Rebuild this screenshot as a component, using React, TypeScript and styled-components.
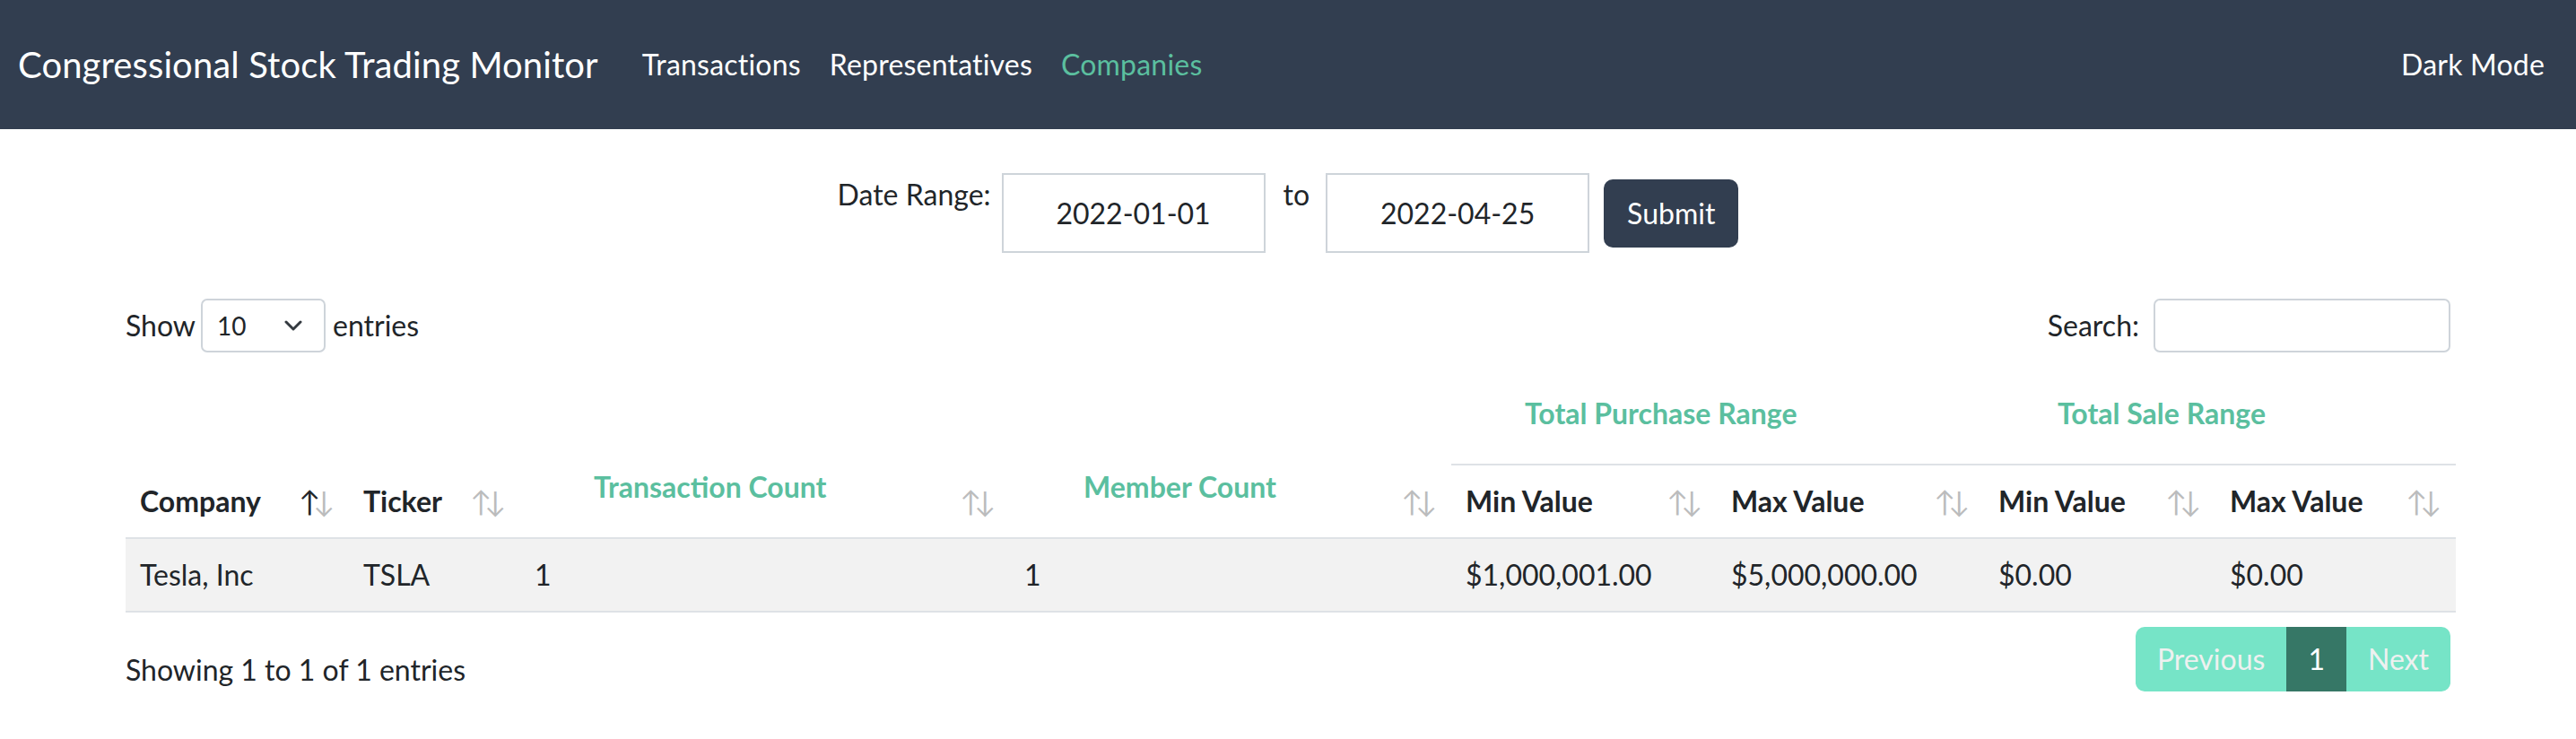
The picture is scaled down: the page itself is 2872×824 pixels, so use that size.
import React from "react";
import styled, { createGlobalStyle } from "styled-components";

const GlobalStyle = createGlobalStyle`
  html, body { margin: 0; padding: 0; background: #ffffff; }
  body {
    font-family: Lato, "Noto Sans", "Liberation Sans", sans-serif;
    color: #212529;
    font-size: 32px;
    line-height: 48px;
  }
  * { box-sizing: border-box; }
`;

const NAVY = "#323e50";
const TEAL = "#5bbf9f";

const Navbar = styled.nav`
  height: 144px;
  background: ${NAVY};
  display: flex;
  align-items: center;
  justify-content: space-between;
  padding: 0 19px 0 20px;
`;

const NavLeft = styled.div`
  display: flex;
  align-items: center;
`;

const Brand = styled.a`
  font-size: 40px;
  line-height: 60px;
  color: #ffffff;
  margin-right: 33px;
  letter-spacing: 0.1px;
  white-space: nowrap;
  text-decoration: none;
`;

const NavLink = styled.a<{ $active?: boolean }>`
  font-size: 32px;
  line-height: 48px;
  padding: 0 16px;
  letter-spacing: 0.2px;
  color: ${(p) => (p.$active ? TEAL : "#ffffff")};
  text-decoration: none;
  white-space: nowrap;
`;

const DateForm = styled.form`
  display: flex;
  justify-content: center;
  align-items: flex-start;
  margin-top: 49px;
`;

const FormLabel = styled.label<{ $ml?: number; $mr?: number }>`
  font-size: 32px;
  line-height: 48px;
  margin: 0 ${(p) => p.$mr ?? 12}px 0 ${(p) => p.$ml ?? 0}px;
  white-space: nowrap;
`;

const DateInput = styled.input`
  width: 294px;
  height: 89px;
  border: 2px solid #ced4da;
  border-radius: 0;
  background: #ffffff;
  text-align: center;
  font-family: inherit;
  font-size: 32px;
  color: #212529;
  padding: 0;
  outline: none;
`;

const SubmitButton = styled.button`
  height: 76px;
  margin: 7px 0 0 16px;
  padding: 0 26px;
  background: ${NAVY};
  color: #ffffff;
  border: none;
  border-radius: 10px;
  font-family: inherit;
  font-size: 32px;
  line-height: 48px;
`;

const Container = styled.div`
  width: 2592px;
  margin: 51px auto 0;
`;

const Controls = styled.div`
  display: flex;
  justify-content: space-between;
  align-items: center;
  height: 60px;
`;

const ControlGroup = styled.label`
  display: flex;
  align-items: center;
  font-size: 32px;
  line-height: 48px;
  white-space: nowrap;
`;

const LengthSelect = styled.div`
  width: 139px;
  height: 60px;
  margin: 0 8px 0 6px;
  border: 2px solid #ced4da;
  border-radius: 7px;
  display: flex;
  align-items: center;
  justify-content: space-between;
  padding: 0 24px 0 16px;
  font-size: 28px;
  color: #212529;
`;

const SearchInput = styled.input`
  width: 331px;
  height: 60px;
  margin-left: 16px;
  border: 2px solid #ced4da;
  border-radius: 7px;
  font-family: inherit;
  font-size: 28px;
  padding: 0 16px;
  outline: none;
`;

const Table = styled.table`
  margin-top: 28px;
  width: 2598px;
  border-collapse: collapse;
  table-layout: fixed;
`;

const Th = styled.th<{
  $teal?: boolean;
  $indent?: boolean;
  $raised?: boolean;
  $sortable?: boolean;
  $group?: boolean;
}>`
  position: relative;
  font-weight: 700;
  font-size: 32px;
  line-height: 48px;
  text-align: left;
  vertical-align: ${(p) => (p.$group ? "top" : "bottom")};
  padding: 16px ${(p) => (p.$sortable ? 52 : 16)}px
    ${(p) => (p.$raised || p.$group ? 32 : 16)}px
    ${(p) => (p.$indent ? 82 : 16)}px;
  border-bottom: 2px solid #dee2e6;
  color: ${(p) => (p.$teal ? TEAL : "#212529")};
  white-space: nowrap;
`;

const SortArrow = styled.span<{ $dir: "up" | "down"; $on?: boolean }>`
  position: absolute;
  bottom: 16px;
  right: ${(p) => (p.$dir === "up" ? 32 : 16)}px;
  font-weight: 400;
  line-height: 48px;
  color: #212529;
  opacity: ${(p) => (p.$on ? 1 : 0.3)};
`;

const Row = styled.tr`
  background: #f2f2f2;
`;

const Td = styled.td`
  padding: 16px;
  font-size: 32px;
  line-height: 48px;
  border-bottom: 2px solid #dee2e6;
  white-space: nowrap;
`;

const Footer = styled.div`
  display: flex;
  justify-content: space-between;
  align-items: flex-start;
`;

const Info = styled.div`
  padding-top: 40px;
  font-size: 32px;
  line-height: 48px;
`;

const Pagination = styled.ul`
  display: flex;
  list-style: none;
  margin: 16px 0 0;
  padding: 0;
  border-radius: 10px;
  overflow: hidden;
`;

const PageItem = styled.li<{ $active?: boolean }>`
  height: 72px;
  padding: 0 24px;
  font-size: 32px;
  line-height: 72px;
  background: ${(p) => (p.$active ? "#367766" : "#76e4c7")};
  color: ${(p) => (p.$active ? "#ffffff" : "#eef1f0")};
`;

const Chevron = () => (
  <svg width="20" height="12" viewBox="0 0 20 12" fill="none">
    <path d="M2 2l8 8 8-8" stroke="#343a40" strokeWidth="3" strokeLinecap="round" strokeLinejoin="round" />
  </svg>
);

type Col = { label: string; teal?: boolean; indent?: boolean; raised?: boolean; on?: boolean };

const SortArrows = ({ on }: { on?: boolean }) => (
  <>
    <SortArrow $dir="up" $on={on}>↑</SortArrow>
    <SortArrow $dir="down">↓</SortArrow>
  </>
);

const leadCols: Col[] = [
  { label: "Company", on: true },
  { label: "Ticker" },
  { label: "Transaction Count", teal: true, indent: true, raised: true },
  { label: "Member Count", teal: true, indent: true, raised: true },
];

const widths = [249, 191, 546, 492, 296, 298, 258, 268];

const rows = [
  ["Tesla, Inc", "TSLA", "1", "1", "$1,000,001.00", "$5,000,000.00", "$0.00", "$0.00"],
];

export default function App() {
  return (
    <>
      <GlobalStyle />
      <Navbar>
        <NavLeft>
          <Brand>Congressional Stock Trading Monitor</Brand>
          <NavLink>Transactions</NavLink>
          <NavLink>Representatives</NavLink>
          <NavLink $active>Companies</NavLink>
        </NavLeft>
        <NavLink>Dark Mode</NavLink>
      </Navbar>

      <DateForm onSubmit={(e) => e.preventDefault()}>
        <FormLabel $mr={12}>Date Range:</FormLabel>
        <DateInput readOnly defaultValue="2022-01-01" />
        <FormLabel $ml={20} $mr={18}>to</FormLabel>
        <DateInput readOnly defaultValue="2022-04-25" />
        <SubmitButton type="submit">Submit</SubmitButton>
      </DateForm>

      <Container>
        <Controls>
          <ControlGroup>
            Show
            <LengthSelect>
              <span>10</span>
              <Chevron />
            </LengthSelect>
            entries
          </ControlGroup>
          <ControlGroup>
            Search:
            <SearchInput />
          </ControlGroup>
        </Controls>

        <Table>
          <colgroup>
            {widths.map((w, i) => (
              <col key={i} style={{ width: w }} />
            ))}
          </colgroup>
          <thead>
            <tr>
              {leadCols.map((c) => (
                <Th
                  key={c.label}
                  rowSpan={2}
                  $sortable
                  $teal={c.teal}
                  $indent={c.indent}
                  $raised={c.raised}
                >
                  {c.label}
                  <SortArrows on={c.on} />
                </Th>
              ))}
              <Th colSpan={2} $group $teal $indent>
                Total Purchase Range
              </Th>
              <Th colSpan={2} $group $teal $indent>
                Total Sale Range
              </Th>
            </tr>
            <tr>
              {["Min Value", "Max Value", "Min Value", "Max Value"].map((l, i) => (
                <Th key={i} $sortable>
                  {l}
                  <SortArrows />
                </Th>
              ))}
            </tr>
          </thead>
          <tbody>
            {rows.map((r, i) => (
              <Row key={i}>
                {r.map((v, j) => (
                  <Td key={j}>{v}</Td>
                ))}
              </Row>
            ))}
          </tbody>
        </Table>

        <Footer>
          <Info>Showing 1 to 1 of 1 entries</Info>
          <Pagination>
            <PageItem>Previous</PageItem>
            <PageItem $active>1</PageItem>
            <PageItem>Next</PageItem>
          </Pagination>
        </Footer>
      </Container>
    </>
  );
}
